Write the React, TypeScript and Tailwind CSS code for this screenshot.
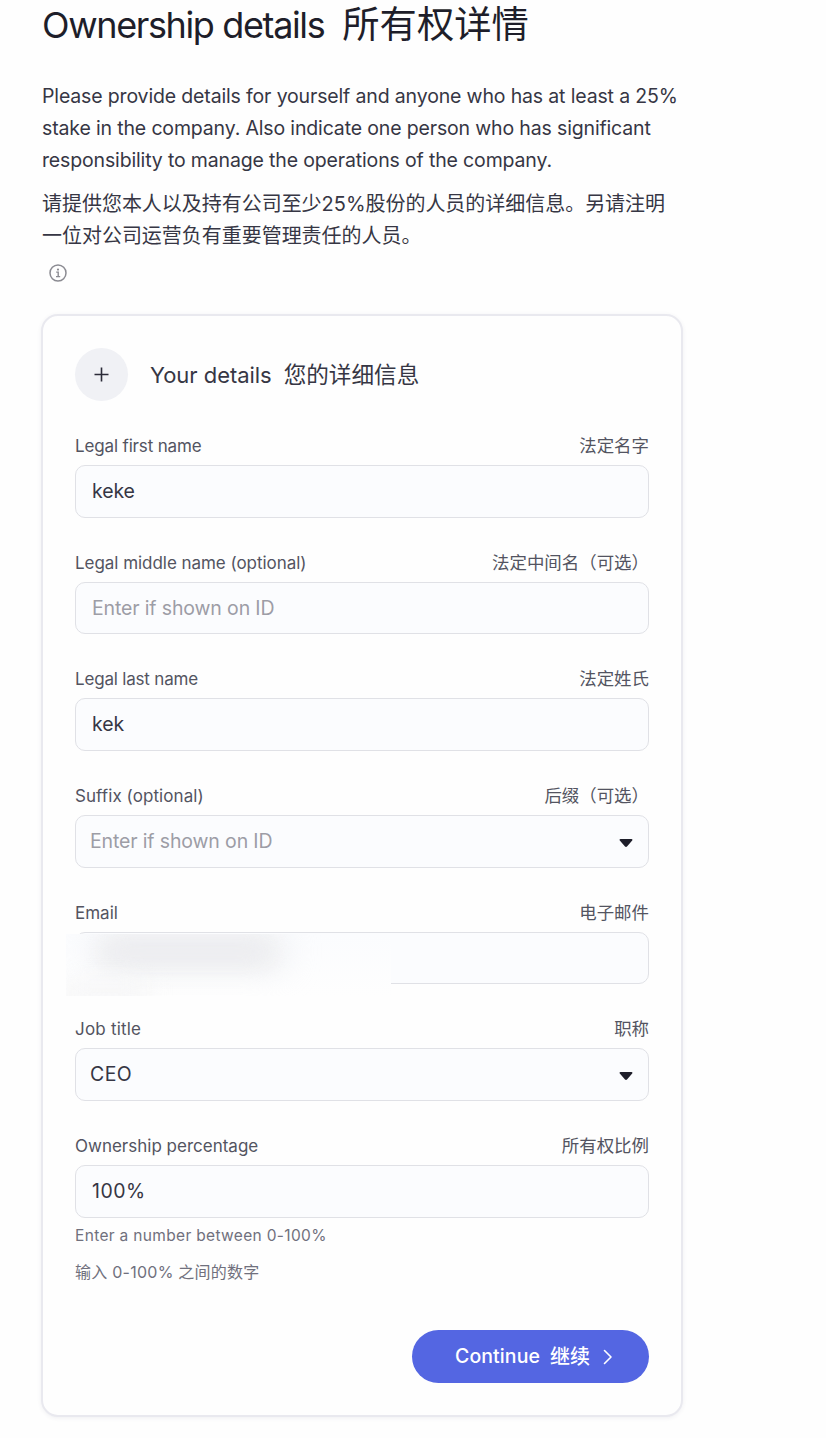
type Field = {
  label: string;
  labelZh: string;
  tracking: string;
  value?: string;
  valueTracking?: string;
  placeholder?: string;
  select?: boolean;
  redacted?: boolean;
};

const fields: Field[] = [
  { label: "Legal first name", labelZh: "法定名字", tracking: "tracking-[-0.15px]", value: "keke", valueTracking: "tracking-[-0.1px]" },
  { label: "Legal middle name (optional)", labelZh: "法定中间名（可选）", tracking: "tracking-[-0.04px]", placeholder: "Enter if shown on ID" },
  { label: "Legal last name", labelZh: "法定姓氏", tracking: "tracking-[-0.19px]", value: "kek", valueTracking: "tracking-[-0.1px]" },
  { label: "Suffix (optional)", labelZh: "后缀（可选）", tracking: "tracking-[0.08px]", placeholder: "Enter if shown on ID", select: true },
  { label: "Email", labelZh: "电子邮件", tracking: "tracking-normal", redacted: true },
  { label: "Job title", labelZh: "职称", tracking: "tracking-[0.2px]", value: "CEO", valueTracking: "tracking-[0.4px]", select: true },
  { label: "Ownership percentage", labelZh: "所有权比例", tracking: "tracking-normal", value: "100%", valueTracking: "tracking-[0.5px]" },
];

const InfoIcon = () => (
  <svg width="18" height="18" viewBox="0 0 18 18" fill="none" stroke="#8b8b92" strokeWidth="1.5">
    <circle cx="9" cy="9" r="8" />
    <path d="M7.2 8.1h2v4.3M7 12.6h4.2" strokeWidth="1.4" />
    <circle cx="9" cy="5.6" r="1.1" fill="#8b8b92" stroke="none" />
  </svg>
);

const Caret = () => (
  <svg className="mt-[4px]" width="14" height="9" viewBox="0 0 14 9" fill="#1e1e2a">
    <path d="M1.5 0h11c.9 0 1.3.9.7 1.5L8 7.6c-.5.6-1.5.6-2 0L.8 1.5C.2.9.6 0 1.5 0Z" />
  </svg>
);

const FormField = ({ field }: { field: Field }) => (
  <div className="h-[116.67px]">
    <div className="flex h-[38px] items-center justify-between whitespace-nowrap text-[17px] text-[#535461]">
      <span className={`pt-[1.5px] ${field.tracking}`}>{field.label}</span>
      <span className="text-[17.45px]">{field.labelZh}</span>
    </div>
    <div className="relative">
      <div
        className={`flex h-[52.6px] items-center justify-between rounded-[10px] border border-[#e0e1e6] bg-[#fbfcfe] text-[19.5px] ${
          field.select ? "pl-[14px] pr-[15.5px]" : "px-4"
        }`}
      >
        <span className={field.value ? `pt-px text-[#363644] ${field.valueTracking}` : "pt-px tracking-[-0.14px] text-[#9d9da6]"}>
          {field.value ?? field.placeholder}
        </span>
        {field.select && <Caret />}
      </div>
      {/* blurred-out address */}
      {field.redacted && (
        <div className="absolute -left-[9px] top-[2px] h-[62px] w-[325px] overflow-hidden bg-linear-to-b from-[#fbfcfe] to-[#fefefe]">
          <div className="absolute left-[28px] top-[3px] h-[28px] w-[190px] rounded-full bg-[#e7e8eb] blur-[17px]" />
          <div className="absolute left-[38px] top-[10px] h-[16px] w-[165px] rounded-full bg-[#ececef] blur-[10px]" />
          <div className="absolute -left-[4px] top-[50px] h-[22px] w-[85px] bg-[#f5f5f6] blur-[12px]" />
        </div>
      )}
    </div>
  </div>
);

const App = () => {
  return (
    <div className="h-[1438px] overflow-hidden bg-[#fefefe] pl-[41px] font-['Inter','Noto_Sans_CJK_SC',sans-serif]">
      <h1 className="flex h-[50px] items-center gap-[18px] whitespace-nowrap pl-px text-[36px] text-[#1e1e2a]">
        <span className="tracking-[-1.37px]">Ownership details</span>
        <span className="text-[37.3px]">所有权详情</span>
      </h1>

      <div className="mt-[30px] whitespace-nowrap pl-px text-[19.5px] leading-8 text-[#363644]">
        <p className="tracking-[-0.15px]">
          Please provide details for yourself and anyone who has at least a 25%
          <br />
          stake in the company. Also indicate one person who has significant
          <br />
          responsibility to manage the operations of the company.
        </p>
        <p className="mt-[12px] text-[19.98px]">
          请提供您本人以及持有公司至少25%股份的人员的详细信息。另请注明
          <br />
          一位对公司运营负有重要管理责任的人员。
        </p>
      </div>
      <div className="mt-[12px] pl-[7.5px]">
        <InfoIcon />
      </div>

      <section className="mt-[32px] h-[1103px] w-[642px] rounded-[17px] border-2 border-[#e9e9ef] bg-[#fefefe] px-8 pt-[32px] shadow-[0_1px_4px_rgba(60,60,100,0.08)]">
        <header className="flex items-center whitespace-nowrap text-[22px] text-[#363644]">
          <div className="flex size-[53px] items-center justify-center rounded-full bg-[#f0f1f5]">
            <svg width="15" height="15" viewBox="0 0 15 15" stroke="#2b2b38" strokeWidth="1.6">
              <path d="M7.5 .5v14M.5 7.5h14" />
            </svg>
          </div>
          <span className="ml-[22px] pt-[2px] tracking-[-0.04px]">Your details</span>
          <span className="ml-[12px] pt-px text-[22.6px]">您的详细信息</span>
        </header>

        <div className="mt-[26px]">
          {fields.map((field) => (
            <FormField key={field.label} field={field} />
          ))}
        </div>

        <div className="-mt-[20px] whitespace-nowrap text-[15.5px] leading-6 text-[#70707d]">
          <p className="tracking-[0.33px]">Enter a number between 0-100%</p>
          <p className="mt-[12px] text-[16px] tracking-[0.25px]">输入 0-100% 之间的数字</p>
        </div>

        <div className="mt-[46px] flex justify-end">
          <button className="flex h-[53px] w-[237px] items-center whitespace-nowrap rounded-full bg-[#5466e2] pl-[43px] text-[19.5px] font-medium text-white">
            <span className="pt-px tracking-[0.1px]">Continue</span>
            <span className="ml-[10px] pt-px text-[20px]">继续</span>
            <svg className="ml-[12.5px] mt-px" width="10" height="16" viewBox="0 0 10 16" fill="none" stroke="white" strokeWidth="1.6" strokeLinecap="round" strokeLinejoin="round">
              <path d="M1.5 1.5L8 8l-6.5 6.5" />
            </svg>
          </button>
        </div>
      </section>
    </div>
  );
};

export default App;
